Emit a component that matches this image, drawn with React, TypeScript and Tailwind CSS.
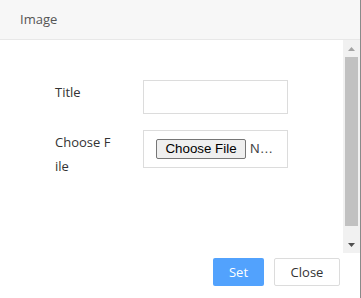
import React from "react";

export default function App() {
  return (
    <div className="w-[361px] h-[298px] flex bg-white font-['Open_Sans',sans-serif] overflow-hidden">
      <div className="flex-1 flex flex-col min-w-0">
        <div className="h-[40px] shrink-0 border-b border-[#e8e8e8] bg-[#f7f7f7] pl-5 text-[13px] leading-[39px] text-[#555]">
          Image
        </div>
        <div className="flex h-[213px] shrink-0">
          <div className="flex-1 pt-10 pl-[55px] flex flex-col gap-4">
            <div className="flex items-start">
              <div className="w-[88px] text-[13px] leading-[24px] text-[#333]">Title</div>
              <div className="w-[145px] h-[34px] border border-[#dcdcdc] bg-white" />
            </div>
            <div className="flex items-start">
              <div className="w-[88px] text-[13px] leading-[24px] text-[#333]">
                Choose F
                <br />
                ile
              </div>
              <div className="w-[145px] h-[38px] border border-[#dcdcdc] bg-white flex items-center pl-[12px]">
                <span className="h-[20px] w-[90px] flex items-center justify-center rounded-[2px] border border-[#767676] bg-[#efefef] text-[13.33px] text-black font-['Liberation_Sans',sans-serif] leading-none">
                  Choose File
                </span>
                <span className="ml-[4px] text-[13.33px] text-[#444] font-['Liberation_Sans',sans-serif] leading-none">
                  N…
                </span>
              </div>
            </div>
          </div>
          <div className="w-[17px] bg-[#f1f1f1] flex flex-col">
            <div className="h-[17px] flex items-center justify-center">
              <svg width="7" height="4" viewBox="0 0 7 4">
                <polygon points="3.5,0 7,4 0,4" fill="#a3a3a3" />
              </svg>
            </div>
            <div className="h-[169px] mx-[2px] bg-[#c1c1c1]" />
            <div className="flex-1" />
            <div className="h-[17px] flex items-center justify-center">
              <svg width="7" height="4" viewBox="0 0 7 4">
                <polygon points="0,0 7,0 3.5,4" fill="#505050" />
              </svg>
            </div>
          </div>
        </div>
        <div className="flex-1 flex justify-end items-start pt-[5px] pr-5 gap-[10px]">
          <button className="w-[51px] h-[28px] rounded-[2px] bg-[#52a2fd] text-white text-[13px] leading-none">
            Set
          </button>
          <button className="w-[66px] h-[28px] rounded-[2px] border border-[#dcdcdc] bg-white text-[#333] text-[13px] leading-none">
            Close
          </button>
        </div>
      </div>
      <div className="w-px bg-[#8a8a8a]" />
    </div>
  );
}
